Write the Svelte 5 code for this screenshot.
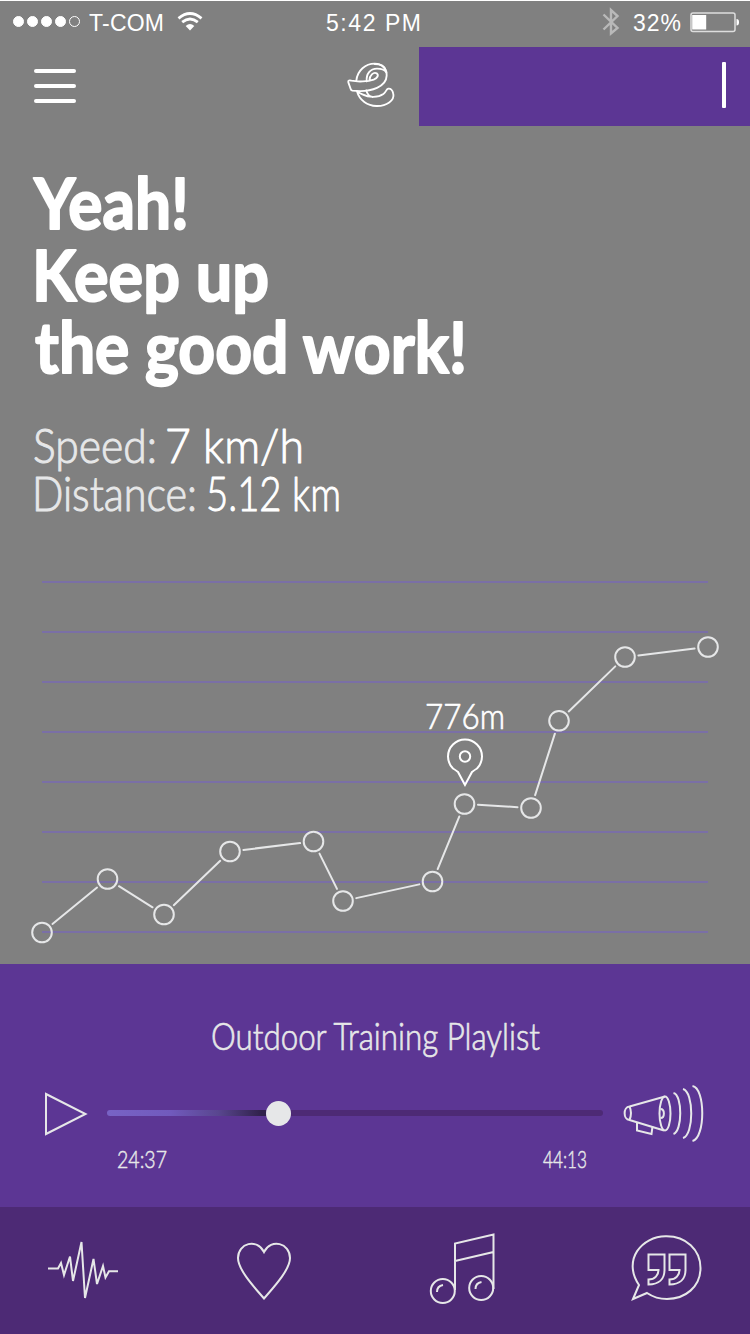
<script lang="ts">
	type Point = { x: number; y: number };

	const signal = [true, true, true, true, false];

	const gridLines = [22, 72, 122, 172, 222, 272, 322, 372];

	const points: Point[] = [
		{ x: 42, y: 372.5 },
		{ x: 107.5, y: 319 },
		{ x: 164, y: 354.5 },
		{ x: 230, y: 291.5 },
		{ x: 313.5, y: 281.5 },
		{ x: 343, y: 341 },
		{ x: 432.5, y: 321.5 },
		{ x: 464.5, y: 244 },
		{ x: 531, y: 248 },
		{ x: 559, y: 160.8 },
		{ x: 625, y: 97 },
		{ x: 708, y: 87 }
	];

	// the lines stop a little before each ring
	const gap = 13.5;

	const segments = points.slice(1).map((b, i) => {
		const a = points[i];
		const length = Math.hypot(b.x - a.x, b.y - a.y);
		const dx = ((b.x - a.x) / length) * gap;
		const dy = ((b.y - a.y) / length) * gap;
		return { x1: a.x + dx, y1: a.y + dy, x2: b.x - dx, y2: b.y - dy };
	});

	const title = [
		{ text: 'Yeah!', x: 34, y: 54, width: 155 },
		{ text: 'Keep up', x: 32, y: 126, width: 237 },
		{ text: 'the good work!', x: 35, y: 198, width: 432 }
	];

	const stats = [
		{ label: 'Speed:', value: '7 km/h', y: 38, x: 33, width: 124, valueX: 165, valueWidth: 139 },
		{ label: 'Distance:', value: '5.12 km', y: 86, x: 32, width: 165, valueX: 206, valueWidth: 135 }
	];
</script>

<div class="screen">
	<header class="status">
		<div class="carrier">
			<div class="signal">
				{#each signal as on}
					<i class:on></i>
				{/each}
			</div>
			<svg width="76" height="30"><text x="0" y="24" textLength="75" class="system">T-COM</text></svg>
			<svg class="wifi" width="26" height="20" viewBox="0 0 26 20">
				<path d="M1.5 6.3Q13-3.2 24.5 6.3M5.2 10.2Q13 3.8 20.8 10.2" />
				<path class="solid" d="M8.7 14Q13 9.8 17.3 14L13 18.5Z" />
			</svg>
		</div>
		<svg class="clock" width="100" height="30"><text x="0" y="24" textLength="95" class="system">5:42 PM</text></svg>
		<div class="power">
			<svg width="18" height="28" viewBox="0 0 18 28">
				<path class="bluetooth" d="M1.5 6.5L15.5 20L9 25.5V2L15.5 8L1.5 21.5" />
			</svg>
			<svg class="percent" width="50" height="30"><text x="0" y="24" textLength="48" class="system">32%</text></svg>
			<svg width="51" height="22" viewBox="0 0 51 22">
				<rect class="shell" x="1" y="1" width="44" height="18.6" rx="2" />
				<rect class="charge" x="2.2" y="3" width="14" height="14.5" />
				<path class="charge" d="M46.500 7Q49 7 49 10.3Q49 13.5 46.500 13.5Z" />
			</svg>
		</div>
	</header>

	<div class="topbar">
		<button class="menu" aria-label="Menu"><span></span><span></span><span></span></button>
		<svg class="logo" width="48" height="46" viewBox="80 186 144 138">
			<path d="M108 242C111 211 136 191 163 191C186 191 200 207 199 227C198 258 157 279 96 272C91 271 91 267 90 264L84 247C82 241 88 240 93 242C112 246 143 245 160 239C172 234 176 225 169 220C160 215 147 226 147 242" />
			<path d="M139 244C137 221 150 206 170 206C182 206 192 209 198 217M163 192C181 192 193 199 196 211" />
			<path d="M110 274C117 301 142 318 168 318C199 319 223 301 219 282C217 269 210 265 204 266C197 268 198 275 189 282C174 293 145 293 128 284Q118 280 112 275M138 271C140 282 148 289 157 291" />
		</svg>
		<div class="search"><span></span></div>
	</div>

	<section class="hero">
		<svg class="title" width="750" height="240">
			{#each title as line}
				<text x={line.x} y={line.y} textLength={line.width} lengthAdjust="spacingAndGlyphs">{line.text}</text>
			{/each}
		</svg>
		<svg class="stats" width="750" height="110">
			{#each stats as stat}
				<text x={stat.x} y={stat.y} textLength={stat.width} lengthAdjust="spacingAndGlyphs" class="label">{stat.label}</text>
				<text x={stat.valueX} y={stat.y} textLength={stat.valueWidth} lengthAdjust="spacingAndGlyphs">{stat.value}</text>
			{/each}
		</svg>
	</section>

	<svg class="chart" width="750" height="404">
		{#each gridLines as y}
			<line class="grid" x1="42" x2="708" y1={y} y2={y} />
		{/each}
		{#each segments as s}
			<line x1={s.x1} y1={s.y1} x2={s.x2} y2={s.y2} />
		{/each}
		{#each points as p}
			<circle cx={p.x} cy={p.y} r="9.8" />
		{/each}
		<path class="pin" d="M465 225L458 212Q455.500 210 453 208.500A17 17 0 1 1 477 208.500Q474.500 210 472 212Z" />
		<circle class="pin" cx="465" cy="196.500" r="5.2" />
		<text x="425" y="169" textLength="80" lengthAdjust="spacingAndGlyphs">776m</text>
	</svg>

	<section class="player">
		<svg class="playlist" width="334" height="50">
			<text x="3" y="37" textLength="329" lengthAdjust="spacingAndGlyphs">Outdoor Training Playlist</text>
		</svg>
		<div class="controls">
			<svg width="44" height="44" viewBox="0 0 44 44">
				<path d="M2 2V42L41.500 22Z" />
			</svg>
			<div class="track">
				<div class="played"></div>
				<div class="knob"></div>
				<div class="rest"></div>
			</div>
			<svg width="84" height="60" viewBox="0 0 84 60">
				<path d="M7.500 22.500L43 12.500M7.500 36L42 46.500M7.500 22.500Q10.500 29 7.500 36M7.500 22.500C1 23 1 35.500 7.500 36" />
				<ellipse cx="43" cy="29.500" rx="5.500" ry="17" />
				<path d="M38.500 25C43 25 43 34 38.500 34M15 38.500V46.500L29.500 50L30.500 42.500" />
				<path d="M51.500 9C60.500 11 60.500 47 51.500 50M61 5C72 8 72 51 61 54M70.500 2C83.500 4 83.500 54 70.500 57" />
			</svg>
		</div>
		<div class="times">
			<svg width="52" height="30"><text x="0" y="21.500" textLength="50" lengthAdjust="spacingAndGlyphs">24:37</text></svg>
			<svg width="46" height="30"><text x="1" y="21.500" textLength="44" lengthAdjust="spacingAndGlyphs">44:13</text></svg>
		</div>
	</section>

	<nav>
		<svg width="70" height="62" viewBox="0 0 70 62">
			<path d="M0 29.500H10L13 24L16 36L22 17.500L25 42L33.500 3L37 59L45.500 20L49 45L55 27L57.500 38.500L61 32.300H70" />
		</svg>
		<svg width="58" height="60" viewBox="0 0 58 60">
			<path d="M29 57.500C20 47 3 29 3 17C3 2 22-3 29 11C36-3 55 2 55 17C55 29 38 47 29 57.500Z" />
		</svg>
		<svg width="68" height="72" viewBox="0 0 68 72">
			<path d="M26 57V10.500L64.500 1.500V56M26 28L64.500 19" />
			<circle cx="13.800" cy="58" r="12" />
			<circle cx="52.200" cy="55" r="12" />
			<path d="M8 59Q8 53 14 52M46.500 56Q46.500 50 52.500 49" />
		</svg>
		<svg width="74" height="68" viewBox="0 0 74 68">
			<path d="M4 65L10 51C-7 26 13 2 37 2.300C57 2 71.500 16 71.500 34C71.500 53 56 65 38 65Q27 65 18 59Z" />
			<path d="M19.500 20.500H35.500V36C35.500 45 30 50.500 19.500 50.500V45.500C26 45.500 29.500 41 29.500 36H19.500ZM40.500 20.500H56.500V36C56.500 45 51 50.500 40.500 50.500V45.500C47 45.500 50.500 41 50.500 36H40.500Z" />
		</svg>
	</nav>
</div>

<style>
	:global(body) {
		margin: 0;
	}
	.screen {
		box-sizing: border-box;
		width: 750px;
		height: 1334px;
		display: flex;
		flex-direction: column;
		border-top: 1px solid #fff;
		background: #808080;
		font-family: Lato, "Open Sans", sans-serif;
		font-weight: 300;
		overflow: hidden;
	}
	svg {
		display: block;
		flex: none;
		fill: none;
		stroke: #e6e7e8;
		stroke-width: 2;
		overflow: visible;
	}
	text {
		fill: #fff;
		stroke: #fff;
		stroke-width: 0.7;
		stroke-linejoin: round;
	}
	.system {
		font: 400 23px "Liberation Sans", Arial, sans-serif;
		stroke: none;
	}

	.status {
		height: 46px;
		display: grid;
		grid-template-columns: 326px 1fr 148px;
	}
	.carrier,
	.power {
		display: flex;
		align-items: flex-start;
	}
	.carrier > svg:first-of-type,
	.clock,
	.percent {
		margin-top: 6px;
	}
	.signal {
		display: flex;
		gap: 3px;
		padding: 15px 9px 0 13px;
	}
	.signal i {
		box-sizing: border-box;
		width: 11px;
		height: 11px;
		border: 1px solid #fff;
		border-radius: 50%;
	}
	.signal .on {
		background: #fff;
	}
	.wifi {
		margin: 11px 0 0 12px;
		stroke: #fff;
		stroke-width: 2.8;
	}
	.wifi .solid {
		fill: #fff;
		stroke: none;
	}
	.power > svg:first-child {
		margin-top: 7px;
	}
	.bluetooth {
		stroke: #b9b9b9;
		stroke-width: 2.4;
	}
	.percent {
		margin-left: 13px;
	}
	.power > svg:last-child {
		margin: 11px 0 0 7px;
	}
	.shell {
		stroke: #ddd;
		stroke-width: 1.5;
	}
	.charge {
		fill: #fff;
		stroke: none;
	}

	.topbar {
		height: 79px;
		display: flex;
	}
	.menu {
		display: flex;
		flex-direction: column;
		gap: 11px;
		margin: 21.5px 270px 0 34px;
		padding: 0;
		border: none;
		background: none;
	}
	.menu span {
		width: 42px;
		height: 4px;
		border-radius: 2px;
		background: #fff;
	}
	.logo {
		margin: 15px 24px 0 1px;
		stroke: #fff;
		stroke-width: 5.5;
		stroke-linecap: round;
		stroke-linejoin: round;
	}
	.search {
		flex: 1;
		display: flex;
		justify-content: flex-end;
		padding: 15px 24px 0 0;
		background: #5c3694;
	}
	.search span {
		width: 4px;
		height: 46px;
		border-radius: 1px;
		background: #fff;
	}

	.hero {
		height: 434px;
		padding-top: 49px;
		box-sizing: border-box;
	}
	.title text {
		font-size: 71px;
		font-weight: 700;
		stroke-width: 2;
	}
	.stats {
		margin-top: 10px;
	}
	.stats text {
		font-size: 48px;
		stroke-width: 1;
	}
	.stats .label {
		fill: #e6e7e8;
		stroke: #e6e7e8;
	}

	.chart line {
		stroke-linecap: round;
	}
	.chart .grid {
		stroke: #7a6fa6;
		stroke-width: 1.8;
		stroke-linecap: butt;
	}
	.chart .pin {
		stroke: #fff;
	}
	.chart text {
		font-size: 36px;
	}

	.player {
		height: 243px;
		box-sizing: border-box;
		padding-top: 49px;
		background: #5c3694;
	}
	.player text {
		fill: #e6e7e8;
		stroke: #e6e7e8;
	}
	.playlist {
		margin-left: 208px;
	}
	.playlist text {
		font-size: 37px;
	}
	.controls {
		display: flex;
		align-items: center;
		height: 60px;
		margin-top: 21px;
		padding-left: 44px;
	}
	.controls > svg:last-child {
		margin-left: -1px;
	}
	.track {
		display: flex;
		align-items: center;
		width: 496px;
		margin: 0 20px 2px 19px;
	}
	.played,
	.rest {
		height: 6px;
		background: #4d2a75;
	}
	.played {
		width: 159px;
		border-radius: 3px 0 0 3px;
		background: linear-gradient(90deg, #7863c5 0%, #715abd 40%, #59468f 70%, #30214b 97%);
	}
	.knob {
		width: 25px;
		height: 25px;
		border-radius: 50%;
		background: #e6e7e8;
	}
	.rest {
		flex: 1;
		border-radius: 0 3px 3px 0;
	}
	.times {
		display: flex;
		justify-content: space-between;
		padding: 2px 162px 0 117px;
	}
	.times text {
		font-size: 24px;
		stroke-width: 0.5;
	}

	nav {
		flex: 1;
		display: flex;
		align-items: flex-start;
		padding: 32px 47px 0 48px;
		background: #4d2a75;
	}
	nav svg:nth-child(2) {
		margin-left: 117px;
		margin-top: 2px;
	}
	nav svg:nth-child(3) {
		margin-left: 136px;
		margin-top: -6px;
	}
	nav svg:nth-child(4) {
		margin-left: 132px;
		margin-top: -5px;
	}
</style>
